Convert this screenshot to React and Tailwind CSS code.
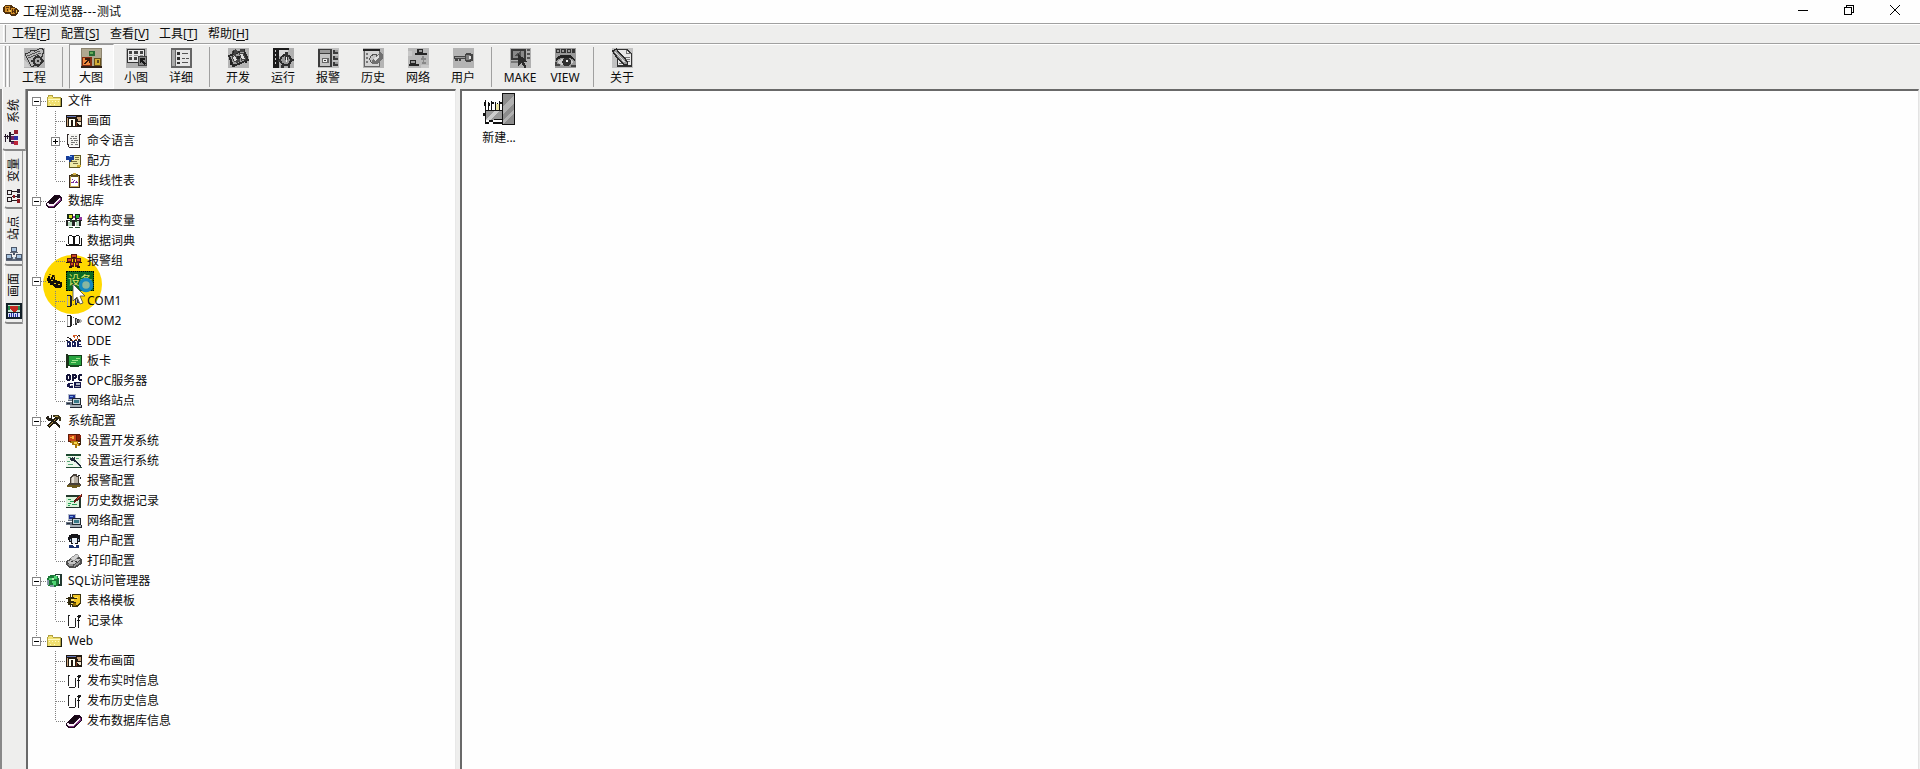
import { Fragment } from 'react';

const icons = {
  folder: (
    <>
      <path d="M1 4h1V2h5v2h8v10H1z" fill="#b0a040" />
      <path d="M2 4h1V3h3v1l1 1h7v8H2z" fill="#f0e070" />
      <path d="M2 6h12v1H2zM3 8h1v1H3zM6 8h1v1H6zM9 8h1v1H9zM12 8h1v1h-1zM4 11h1v1H4zM8 11h1v1H8z" fill="#fffac0" />
      <path d="M1 14h15V5h-1v8H1z" fill="#202010" />
    </>
  ),
  picture: (
    <>
      <path d="M0 2h16v12H0z" fill="#201810" />
      <path d="M1 3h9v1H1z" fill="#6878b8" />
      <path d="M1 5h1v8H1zM11 4h4v4h-3z" fill="#c8a078" />
      <path d="M3 6h2v7H3zM7 6h2v7H7zM3 6h6v1H3z" fill="#fffff0" />
      <path d="M11 9h4v3h-2z" fill="#eee8d0" />
      <path d="M10 9h1v4h-1z" fill="#803820" />
    </>
  ),
  script: (
    <>
      <path d="M2 1h11v12H2z" fill="#f4f4f0" />
      <path d="M1 1h2v1H2v9h1v3H2V12H1zM13 1h2v1h-1v12h-1zM3 14h11v1H3z" fill="#302828" />
      <path d="M5 3h3v1H5zM9 3h2v1H9zM4 5h2v1H4zM7 5h4v1H7zM5 7h2v1H5zM8 7h4v1H8zM5 9h4v1H5zM10 9h1v1h-1zM5 11h2v1H5zM9 11h3v1H9z" fill="#777" />
    </>
  ),
  recipe: (
    <>
      <path d="M5 2h10v11l-2 2H3V8h2z" fill="#605820" />
      <path d="M6 3h8v9l-2 2H4V9h2z" fill="#eeeaa8" />
      <path d="M0 3h4V2h4v5H5v2H3V7H0z" fill="#163c98" />
      <path d="M3 3h3v1H3z" fill="#62a6ee" />
      <path d="M9 4h4v1H9zM9 6h4v1H9zM6 8h5v1H6zM7 10h5v1H7z" fill="#777040" />
      <path d="M11 12h4v2h-4z" fill="#d0b030" />
    </>
  ),
  clipboard: (
    <>
      <path d="M3 2h11v13H3z" fill="#332418" />
      <path d="M4 3h9v11H4z" fill="#c8a858" />
      <path d="M5 4h7v9H5z" fill="#fff" />
      <path d="M5 1h7v3H5z" fill="#605018" />
      <path d="M7 0h3v2H7z" fill="#d4b048" />
      <path d="M5 9h2V8h1v2H5zM8 7h1v1H8zM9 9h1V8h1v1h1v1H9zM6 6h1v1H6z" fill="#8030a0" />
    </>
  ),
  database: (
    <>
      <path d="M0 10 9 2h4l3 3v3l-8 7H3l-3-2z" fill="#200820" />
      <path d="M1 12h6l8-7v3l-8 6H3z" fill="#813080" />
      <path d="M1 10h1l1 1h4l7-7v2l-7 7H3l-2-1z" fill="#faf0f8" />
      <path d="M2 9 9 3h4l-6 6z" fill="#150812" />
    </>
  ),
  struct: (
    <>
      <path d="M1 1h6v5H1zM9 1h5v5H9z" fill="#182818" />
      <path d="M3 2h3v3H3z" fill="#d8e020" />
      <path d="M10 2h3v3h-3z" fill="#28b038" />
      <path d="M0 7h16v1H0zM0 8h2v5H0zM6 8h3v5H6zM13 8h2v5h-2z" fill="#222" />
      <path d="M2 9h4v4H2zM10 8h3v5h-3z" fill="#b8dcc0" />
      <path d="M4 6h2v3H4zM9 6h2v3H9zM3 14h4v1H3zM9 14h5v1H9z" fill="#285030" />
      <path d="M7 3h2v2H7zM13 4h3v3h-3z" fill="#9038a0" />
    </>
  ),
  book: (
    <>
      <path d="M2 2h5l1 1 1-1h5v9H2z" fill="#fff" />
      <path d="M3 2h3v1H3zM10 2h3v1h-3zM2 3h1v8H2zM13 3h1v8h-1zM6 3h2v1H6zM8 3h2v1H8zM7 4h2v8H7zM0 12h16v1H0zM0 11h1v1H0zM15 5h1v7h-1zM3 11h4v1H3zM9 11h4v1H9z" fill="#111" />
    </>
  ),
  alarmGroup: (
    <>
      <path d="M5 1h6v5H5zM1 5h5v5H1zM10 5h5v5h-5zM4 9h4v5H4zM9 9h4v5H9zM7 6h2v4H7z" fill="#591812" />
      <path d="M6 2h4v2H6zM2 6h3v2H2zM11 6h3v2h-3zM5 10h2v2H5zM10 10h2v2h-2z" fill="#d14428" />
      <path d="M7 4h2v1H7zM0 9h3v1H0zM13 9h3v1h-3zM3 13h3v2H3zM11 13h3v2h-3z" fill="#22100c" />
    </>
  ),
  device: (
    <>
      <path d="M2 3h2v1h2V2h2v2h1v3h2v1h3v1h2v4l-2 2H9l-3-3H4v-2H2V8H1V5h1z" fill="#151008" />
      <path d="M4 4h1v2H4zM7 4h1v2H7zM5 7h2v1H5zM8 10h2v1H8zM12 11h2v1h-2z" fill="#e8c018" />
      <path d="M3 1h2v1H3zM8 2h1v2H8z" fill="#705808" />
    </>
  ),
  port: (
    <>
      <path d="M1 2h4v1h1v10H5v1H1v-1h3V3H1z" fill="#222" />
      <path d="M1 3h1v10H1z" fill="#aaa" />
      <path d="M9 5h2v1h2v4h-2v2H9z" fill="#333" />
      <path d="M10 6h1v4h-1zM13 6h2v1h1v2h-1v1h-2z" fill="#b4b4b4" />
      <path d="M7 4h1v1H7zM7 11h1v1H7zM12 7h2v2h-2z" fill="#666" />
    </>
  ),
  dde: (
    <>
      <path d="M7 2h4v1H9v2H8V4H7zM11 4h1v2h-1zM9 6h2v1H9zM5 7h2v1H5zM13 3h1v1h-1z" fill="#d05820" />
      <path d="M1 4h2v1H1zM3 5h2v1h1v2H4V6H3zM12 2h2v1h-2zM11 3h1v1h-1zM12 6h2v1h1v1h-3zM8 7h3v1H8zM0 7h2v1H0z" fill="#282020" />
      <path d="M1 8h3v1h1v5H1zM6 8h3v1h1v5H6zM11 8h4v1h-2v2h2v1h-2v1h3v1h-5z" fill="#182058" />
      <path d="M2 10h1v2H2zM7 10h1v2H7z" fill="#fff" />
    </>
  ),
  board: (
    <>
      <path d="M0 1h2v14H0z" fill="#20301c" />
      <path d="M2 2h14v11H2z" fill="#123c18" />
      <path d="M3 3h12v9H3z" fill="#28a440" />
      <path d="M10 5h4v1h-4zM6 7h6v1H6zM5 9h5v1H5z" fill="#9ce488" />
      <path d="M4 12h9v2H4z" fill="#174a1e" />
    </>
  ),
  opc: (
    <>
      <path d="M1 1h3v1h1v5H4v1H1V7H0V2h1zM6 1h4v1h1v3h-1v1H8v2H6zM13 1h3v2h-2v3h2v2h-3V7h-1V2h1z" fill="#141438" />
      <path d="M2 3h1v3H2zM8 3h1v1H8z" fill="#fff" />
      <path d="M2 10h5v1H4v2h3v2H3v-1H1v-3h1zM8 9h7v6H8z" fill="#161648" />
      <path d="M10 10h4v2h-4z" fill="#b0b8c8" />
      <path d="M9 13h5v1H9zM5 12h2v1H5z" fill="#99a" />
    </>
  ),
  network: (
    <>
      <path d="M2 1h8v6H2z" fill="#b4bcc8" />
      <path d="M3 2h6v4H3z" fill="#20308c" />
      <path d="M4 3h3v1H4z" fill="#6ca4e8" />
      <path d="M2 7h6v1H2zM0 9h6v3H0z" fill="#677384" />
      <path d="M6 5h9v7H6z" fill="#202830" />
      <path d="M7 6h7v5H7z" fill="#c4d0d8" />
      <path d="M8 7h5v3H8z" fill="#397887" />
      <path d="M4 12h11v3H4z" fill="#a8b0b8" />
      <path d="M4 15h12v-3h-1v2H4zM1 10h3v1H1z" fill="#252c38" />
    </>
  ),
  tools: (
    <>
      <path d="m2 14 9-9" stroke="#201c10" strokeWidth="3" />
      <path d="m3 13 7-7" stroke="#b09048" />
      <path d="m5 6 9 8" stroke="#201c14" strokeWidth="2.2" />
      <path d="M7 2h5l3 2v4h-2V6l-3-2H7z" fill="#3b3418" />
      <path d="M1 3h2v2h2V2h1v4L4 8H2L0 6V4h1z" fill="#252018" />
      <path d="M9 3h3v1H9z" fill="#b8a050" />
    </>
  ),
  devConfig: (
    <>
      <path d="M2 1h12v8H2z" fill="#5c1a08" />
      <path d="M3 2h7v6H3z" fill="#c84418" />
      <path d="M4 4h3v1H4zM6 3h2v3H6z" fill="#f8b040" />
      <path d="M11 2h4v5h-4z" fill="#88200a" />
      <path d="M5 8h7v2h2v3h-3v2H9v-3H6v-2H4z" fill="#a87810" />
      <path d="M8 9h3v2H8zM11 11h1v2h-1z" fill="#ffd848" />
      <path d="M14 5h1v7h-2v-2h1z" fill="#3c200c" />
    </>
  ),
  runConfig: (
    <>
      <path d="M0 1h15v13H0z" fill="#eef8ec" />
      <path d="M0 1h15v2H0zM0 14h16v1H0z" fill="#1d4830" />
      <path d="M2 4h3v1H2zM1 8h3v1H1zM10 5h3v1h-3zM2 11h5v1H2z" fill="#58a878" />
      <path d="m6 5 9 9" stroke="#202838" strokeWidth="2.8" />
      <path d="M4 5h2v2h2V4h1v4H7L5 8z" fill="#202838" />
      <path d="m9 9 5 5" stroke="#dce0e8" />
    </>
  ),
  bell: (
    <>
      <path d="M7 1h4v2h2v7l2 2v1H2v-2l2-2V4l3-2z" fill="#484038" />
      <path d="M7 3h3v1h2v6H5V6z" fill="#b8b0a4" />
      <path d="M6 4h2v6H6z" fill="#e4e0d8" />
      <path d="M1 12h13v2H1zM6 14h5v1H6z" fill="#6a581c" />
      <path d="M12 2h2v1h-2zM14 4h1v2h-1z" fill="#222" />
    </>
  ),
  history: (
    <>
      <path d="M0 2h15v13H0z" fill="#24382c" />
      <path d="M0 4h13v10H0z" fill="#ddf4dc" />
      <path d="M2 6h3v1H2zM4 8h4v1H4zM2 10h3v1H2zM6 11h5v1H6zM2 12h2v1H2z" fill="#28a058" />
      <path d="m8 9 8-7" stroke="#601c14" strokeWidth="2.4" />
      <path d="m11 6 4-4" stroke="#d84028" />
    </>
  ),
  user: (
    <>
      <path d="M3 2h2V1h7v1h2v7h-2v2H5V9H3V7H2V4h1z" fill="#15151a" />
      <path d="M6 5h5v5H9v1H7v-1H6z" fill="#e8f0f8" />
      <path d="M4 6h1v2H4zM12 6h1v2h-1z" fill="#8fb0d0" />
      <path d="M3 12h3l2 2 2-2h3v3H3z" fill="#17306c" />
      <path d="M7 12h3v2H8z" fill="#fff" />
    </>
  ),
  printer: (
    <>
      <path d="m0 8 7-4h6l3 3v4l-7 4H3l-3-3z" fill="#4c4c4c" />
      <path d="m1 9 6-3h6l1 1-6 4H3z" fill="#c4c4c4" />
      <path d="m4 6 6-5 3 2-5 5z" fill="#d2d2d2" stroke="#777" strokeWidth=".7" />
      <path d="m8 12 6-4v2l-6 4zM2 11h5v2H3z" fill="#949494" />
      <path d="M5 8h2v1H5zM9 8h2v1H9z" fill="#333" />
    </>
  ),
  sql: (
    <>
      <path d="M9 1h7v12h-5V2H9z" fill="#223830" />
      <path d="M11 2h3v9h-3z" fill="#f4fcf8" />
      <circle cx="7" cy="8" r="6.5" fill="#1c7838" />
      <path d="M3 5h3v2H3zM6 8h4v4H7v-2H6zM8 3h3v3H8z" fill="#50d474" />
      <path d="M1 7h2v5H1zM4 12h4v2H4z" fill="#8898a8" />
      <path d="M6 5h2v2H6z" fill="#b8f0b8" />
    </>
  ),
  template: (
    <>
      <path d="M6 1h9v9l-3 4H6z" fill="#39300a" />
      <path d="M7 2h7v7l-3 3H7z" fill="#f0c424" />
      <path d="M4 1h1v13H4zM0 5h11v1H0zM1 9h9v1H1zM2 4h6v8H2z" fill="#30280c" />
      <path d="M5 6h3v2H5zM5 10h2v1H5zM9 4h3v1H9z" fill="#ffe468" />
      <path d="M7 10h3v3H7z" fill="#8c6800" />
    </>
  ),
  record: (
    <>
      <path d="M2 2h2v1H3v10H2zM3 14h6v1H3zM9 5h1v9H9z" fill="#222" />
      <path d="M11 3h1V2h3v2h-1v1h-1v2h1v1h-1v7h-1V8h-1V7h1V4h-1z" fill="#181818" />
    </>
  ),
  tabSystem: (
    <>
      <path d="M0 6h5v1H0zM1 4h1v8H1zM5 2h2v10H5zM6 4h4v1H6zM6 11h4v1H6zM3 5h1v4H3z" fill="#241828" />
      <path d="M10 0h4v4h-4z" fill="#922030" />
      <path d="M10 6h4v4h-4z" fill="#3032a4" />
      <path d="M10 11h4v4h-4z" fill="#bd2538" />
      <path d="M7 6h3v4H7zM7 12h3v2H7z" fill="#732464" />
    </>
  ),
  tabVariable: (
    <>
      <path d="M1 2h5v5H1zM1 9h5v5H1zM6 3h8v1H6zM6 8h8v1H6zM6 12h8v1H6z" fill="#251c20" />
      <path d="M2 3h3v3H2zM2 10h3v3H2z" fill="#eee" />
      <path d="M7 7h2v3H7zM11 11h3v4h-3z" fill="#8b1820" />
      <path d="M11 1h3v4h-3zM11 6h3v4h-3z" fill="#2c2534" />
    </>
  ),
  tabStation: (
    <>
      <path d="M5 1h6v5H5zM0 8h6v6H0zM10 8h6v6h-6zM7 6h2v3H7z" fill="#4a5568" />
      <path d="M6 2h4v3H6zM1 9h4v3H1zM11 9h4v3h-4z" fill="#a8c4e0" />
      <path d="M6 11h4v4H6zM4 6h8v1H4zM0 14h16v1H0z" fill="#606878" />
      <path d="M7 11h2v2H7z" fill="#c8dcea" />
    </>
  ),
  tabPicture: (
    <>
      <path d="M0 0h16v16H0z" fill="#142028" />
      <path d="M2 2h12v7H2z" fill="#c8e4d0" />
      <path d="M4 3h8v4l-3 2H7L4 6z" fill="#c02820" />
      <path d="M2 3h2v4H2zM12 3h2v4h-2z" fill="#27884c" />
      <path d="M2 10h12v4H2z" fill="#d9e0fa" />
      <path d="M3 11h1v3H3zM5 10h1v4H5zM7 10h1v4H7zM9 11h1v3H9zM11 10h1v4h-1z" fill="#2430a0" />
    </>
  ),
  app: (
    <>
      <path d="M0 5 2 2h6l2 2 4 1 2 3-1 3-3 2H8l-2-2H2L0 8z" fill="#50300c" />
      <path d="M2 3h5v6H2zM8 5h4v6H8z" fill="#cf8c28" />
      <path d="M3 4h3v1H3zM4 6h1v2H4zM9 6h1v4H9zM11 6h1v4h-1zM9 8h3v1H9z" fill="#593008" />
      <path d="M6 7h2v2H6zM13 7h1v3h-1z" fill="#ecc050" />
    </>
  ),
};

const toolIcons = {
  project: (
    <>
      <path d="M0 0h20v20H0z" fill="#b4b4b4" />
      <path d="m1 6 5-2 1-2 3 1 7-3 2 3-4 12-8 4z" fill="#b8b8b8" stroke="#383838" />
      <path d="m3 8 12-5M4 10l12-5" stroke="#555" />
      <circle cx="13" cy="13" r="4" fill="#aaa" stroke="#303030" strokeWidth="2" />
      <path d="M12 7h2v3h-2zM12 16h2v3h-2zM7 12h3v2H7zM16 12h3v2h-3zM12 12h2v2h-2z" fill="#333" />
      <path d="m0 11 6 8H0z" fill="#ccc" />
    </>
  ),
  large: (
    <>
      <path d="M0 0h20v20H0z" fill="#8c8470" />
      <path d="M1 1h18v17H1z" fill="#b0a890" />
      <path d="M8 3h5v5H8z" fill="#286c34" />
      <path d="M9 4h2v2H9z" fill="#68ac58" />
      <path d="M1 9h9v10H1z" fill="#852a10" />
      <path d="M2 10h7v7H2z" fill="#f08a40" />
      <path d="m3 16 4-4M4 11h4v4" stroke="#3c1a0a" strokeWidth="1.5" fill="none" />
      <path d="M12 10h7v9h-7z" fill="#67501a" />
      <path d="M13 11h5v6h-5z" fill="#d4ac34" />
      <path d="M15 12h2v3h-2z" fill="#5a4820" />
      <path d="M0 18h20v2H0z" fill="#302018" />
    </>
  ),
  small: (
    <>
      <path d="M0 0h20v20H0z" fill="#b0b0b0" />
      <path d="M1 1h17v14H1z" fill="#333" />
      <path d="M2 2h15v12H2z" fill="#e8e8e8" />
      <path d="M3 3h3v3H3zM8 3h3v3H8zM13 3h3v3h-3zM3 9h3v3H3zM8 9h2v3H8z" fill="#444" />
      <path d="M3 7h3v1H3zM8 7h3v1H8zM13 7h3v1h-3z" fill="#999" />
      <path d="M11 8h9v10h-9z" fill="#444" />
      <path d="M12 9h7v8h-7z" fill="#888" />
      <path d="M13 10h5v2h-2l3 4-1 1-4-4v2h-1z" fill="#181818" />
    </>
  ),
  detail: (
    <>
      <path d="M0 0h20v20H0z" fill="#666" />
      <path d="M5 2h13v16H5z" fill="#e7e7e7" />
      <path d="M1 2h3v16H1z" fill="#aaa" />
      <path d="M6 4h3v3H6zM6 9h3v3H6zM6 14h3v2H6z" fill="#303030" />
      <path d="M10 5h6v1h-6zM10 10h3v1h-3zM14 10h3v1h-3zM10 14h6v1h-6z" fill="#555" />
    </>
  ),
  develop: (
    <>
      <path d="M0 0h20v20H0z" fill="#b4b4b4" />
      <path d="m1 8 14-6 4 10-14 6z" fill="#a0a0a0" stroke="#2a2a2a" strokeWidth="2" />
      <path d="m4 9 3-2 2 5-3 2zM11 6l3-1 3 6-4 1z" fill="#ddd" stroke="#444" />
      <path d="m3 4 4-3 3 3-4 3zM11 1h4v3h-4zM7 13l4-2 1 3-4 1z" fill="#444" />
      <path d="M2 13h2v4H2zM16 13h2v2h-2zM5 3h1v2H5zM9 8h2v3H9z" fill="#222" />
    </>
  ),
  run: (
    <>
      <path d="M0 0h20v20H0z" fill="#b0b0b0" />
      <path d="M0 0h6v20H0zM6 0h9v2H6z" fill="#1b1b1b" />
      <path d="M2 2h1v2H2zM2 6h1v2H2zM2 10h1v2H2zM2 14h1v2H2z" fill="#ccc" />
      <path d="M6 2h8v6H6z" fill="#d8d8d8" />
      <circle cx="12" cy="12" r="5" fill="#999" stroke="#2b2b2b" strokeWidth="2" />
      <path d="M11 4h3v8h-3zM5 12h3v2H5zM17 11h3v2h-3zM8 17h2v3H8zM14 17h2v3h-2z" fill="#333" />
      <path d="M12 9h1v5h-1z" fill="#eee" />
    </>
  ),
  alarm: (
    <>
      <path d="M0 0h20v20H0z" fill="#c0c0c0" />
      <path d="M0 1h13v18H0z" fill="#3c3c3c" />
      <path d="M2 6h9v12H2z" fill="#c4c4c4" />
      <path d="M2 2h9v3H2z" fill="#999" />
      <path d="M4 10h6v5H4z" fill="#666" />
      <path d="M5 11h4v3H5z" fill="#eee" />
      <path d="M6 12h2v1H6zM14 2h5v4h-5zM14 8h5v4h-5zM14 14h5v4h-5z" fill="#3a3a3a" />
      <path d="M16 2h3v2h-3zM16 8h3v2h-3zM16 14h3v2h-3z" fill="#999" />
    </>
  ),
  history: (
    <>
      <path d="M0 0h20v20H0z" fill="#b4b4b4" />
      <path d="M1 1h15v18H1z" fill="#666" />
      <path d="M2 3h13v15H2z" fill="#d4d4d4" />
      <path d="M0 1h16v2H0z" fill="#222" />
      <path d="M3 5h2v2H3zM3 9h2v2H3zM3 13h2v2H3z" fill="#777" />
      <circle cx="11" cy="11" r="4.5" fill="#c4c4c4" stroke="#555" />
      <path d="m8 13 9-9 2 2v5l-5 5H9z" fill="#707070" />
      <path d="m10 11 5-4v3l-3 3z" fill="#ddd" />
    </>
  ),
  network: (
    <>
      <path d="M0 0h20v20H0z" fill="#b8b8b8" />
      <path d="M9 1h5v4H9zM7 5h11v2H7zM2 12h6v4H2zM1 16h9v2H1z" fill="#262626" />
      <path d="M10 2h3v2h-3zM3 13h4v2H3z" fill="#999" />
      <path d="M13 8h2v2h2v2h-2v2h2v2h-4v-2h1v-2h-2v-2h2z" fill="#888" />
      <path d="M0 3h4v5H0zM12 17h8v3h-8z" fill="#c8c8c8" />
    </>
  ),
  key: (
    <>
      <path d="M0 0h20v20H0z" fill="#b4b4b4" />
      <path d="M1 8h10V6h1V5h5v1h2v7h-2v1h-5v-1h-1v-2H8v2H6v-2H5v2H2v-2H1z" fill="#444" />
      <path d="M2 9h9v1H2z" fill="#999" />
      <path d="M12 7h4v5h-4z" fill="#808080" />
      <path d="M15 8h2v3h-2z" fill="#ddd" />
    </>
  ),
  make: (
    <>
      <path d="M0 0h20v20H0z" fill="#b0b0b0" />
      <path d="M1 1h14v11H1z" fill="#3a3a3a" />
      <path d="M3 3h10v7H3z" fill="#8a8a8a" />
      <path d="m4 8 6-5v5z" fill="#505050" />
      <path d="M16 1h3v2h-3zM16 5h3v2h-3zM16 9h3v2h-3z" fill="#555" />
      <path d="m8 6 9 8h-4l3 5-2 1-3-5-3 3z" fill="#2c2c2c" />
      <path d="M1 13h7v2H1z" fill="#777" />
    </>
  ),
  view: (
    <>
      <path d="M0 0h20v20H0z" fill="#999" />
      <path d="M1 1h4v4H1zM6 1h4v4H6zM11 1h4v4h-4zM16 1h3v4h-3z" fill="#333" />
      <path d="M2 2h2v2H2zM7 2h2v2H7zM12 2h2v2h-2z" fill="#999" />
      <path d="M1 10 5 7h10l4 4v2l-4-3H5l-4 3z" fill="#222" />
      <path d="m2 14 4-3h8l4 3-4 3H6z" fill="#ccc" />
      <circle cx="11" cy="14" r="4" fill="#303030" />
      <path d="M10 12h2v2h-2z" fill="#eee" />
      <path d="M0 14h2v2h3v2H0zM15 17h5v2h-5z" fill="#444" />
    </>
  ),
  about: (
    <>
      <path d="M0 0h20v20H0z" fill="#c2c2c2" />
      <path d="M5 1h10l4 4v14H5z" fill="#333" />
      <path d="M6 2h8l4 4v11H6z" fill="#e8e8e8" />
      <path d="M13 2h1v3h4v1h-5zM9 9h8v1H9zM11 11h6v1h-6zM13 13h4v1h-4zM7 15h8v1H7z" fill="#777" />
      <path d="m1 3 3-2 11 13v3h-3L2 6z" fill="#999" stroke="#2a2a2a" strokeWidth="1.4" />
      <path d="m3 4 9 10" stroke="#ddd" />
    </>
  ),
};

const tree = [
  {
    label: '文件', icon: 'folder',
    children: [['画面', 'picture'], ['命令语言', 'script', true], ['配方', 'recipe'], ['非线性表', 'clipboard']],
  },
  {
    label: '数据库', icon: 'database',
    children: [['结构变量', 'struct'], ['数据词典', 'book'], ['报警组', 'alarmGroup']],
  },
  {
    label: '设备', icon: 'device', selected: true,
    children: [['COM1', 'port'], ['COM2', 'port'], ['DDE', 'dde'], ['板卡', 'board'], ['OPC服务器', 'opc'], ['网络站点', 'network']],
  },
  {
    label: '系统配置', icon: 'tools',
    children: [
      ['设置开发系统', 'devConfig'], ['设置运行系统', 'runConfig'], ['报警配置', 'bell'], ['历史数据记录', 'history'],
      ['网络配置', 'network'], ['用户配置', 'user'], ['打印配置', 'printer'],
    ],
  },
  { label: 'SQL访问管理器', icon: 'sql', children: [['表格模板', 'template'], ['记录体', 'record']] },
  {
    label: 'Web', icon: 'folder',
    children: [['发布画面', 'picture'], ['发布实时信息', 'record'], ['发布历史信息', 'record'], ['发布数据库信息', 'database']],
  },
];

const menus = [['工程', 'F'], ['配置', 'S'], ['查看', 'V'], ['工具', 'T'], ['帮助', 'H']];

const toolGroups = [
  [['工程', 'project']],
  [['大图', 'large'], ['小图', 'small'], ['详细', 'detail']],
  [['开发', 'develop'], ['运行', 'run'], ['报警', 'alarm'], ['历史', 'history'], ['网络', 'network'], ['用户', 'key']],
  [['MAKE', 'make'], ['VIEW', 'view']],
  [['关于', 'about']],
];

const tabs = [['系统', 'tabSystem'], ['变量', 'tabVariable'], ['站点', 'tabStation'], ['画面', 'tabPicture']];

function Icon({ name }) {
  return (
    <svg className="w-4 h-4 shrink-0" viewBox="0 0 16 16" fill="none" shapeRendering="crispEdges">
      {icons[name]}
    </svg>
  );
}

function TitleBar() {
  return (
    <div className="h-[23px] flex items-center bg-[#fefefe] pl-[3px]">
      <div className="-mt-px"><Icon name="app" /></div>
      <span className="ml-1">工程浏览器<span className="tracking-[0.8px]">---</span>测试</span>
      <div className="ml-auto flex items-center gap-9 pr-[20px] -mt-[3px]">
        <svg className="w-[10px] h-[10px]" viewBox="0 0 10 10" shapeRendering="crispEdges"><path d="M0 5h10v1H0z" /></svg>
        <svg className="w-[10px] h-[10px]" viewBox="0 0 10 10" fill="none" stroke="#000" shapeRendering="crispEdges">
          <path d="M.5 2.5h7v7h-7zM2.5 2V.5h7v7H8" />
        </svg>
        <svg className="w-[10px] h-[10px]" viewBox="0 0 10 10" stroke="#000"><path d="m0 0 10 10M10 0 0 10" /></svg>
      </div>
    </div>
  );
}

function MenuBar() {
  return (
    <div className="h-[20px] flex items-center pl-[3px] border-t border-[#a0a0a0] shadow-[inset_0_1px_0_#fff]">
      <div className="h-[17px] w-[3px] mr-[6px] border-l border-white border-r border-r-[#a0a0a0]" />
      {menus.map(([label, key]) => (
        <span key={key} className="w-[49px] whitespace-nowrap">
          {label}[<span className="underline underline-offset-2">{key}</span>]
        </span>
      ))}
    </div>
  );
}

function ToolButton({ label, icon, pressed }) {
  return (
    <div className={`w-[45px] flex flex-col items-center pt-[3px] pr-px border ${pressed ? 'bg-[#f8f8f8] border-l-[#999] border-t-[#999] border-r-white border-b-white' : 'border-transparent'}`}>
      <svg className="w-[21px] h-5 shrink-0" viewBox="0 0 20 20" preserveAspectRatio="none" fill="none" shapeRendering="crispEdges">
        {toolIcons[icon]}
      </svg>
      <span className="mt-px leading-[18px]">{label}</span>
    </div>
  );
}

function ToolBar() {
  return (
    <div className="h-[46px] flex pl-[3px] border-t border-[#a0a0a0] shadow-[inset_0_1px_0_#fff]">
      <div className="flex gap-px w-[9px] py-[2px]">
        <div className="w-[3px] border-l border-white border-r border-r-[#a0a0a0]" />
        <div className="w-[3px] border-l border-white border-r border-r-[#a0a0a0]" />
      </div>
      {toolGroups.map((group, i) => (
        <Fragment key={i}>
          {i > 0 && <div className="w-px ml-[5px] mr-[6px] mt-[3px] mb-[2px] bg-[#a0a0a0]" />}
          {group.map(([label, icon]) => (
            <ToolButton key={label} label={label} icon={icon} pressed={label === '大图'} />
          ))}
        </Fragment>
      ))}
    </div>
  );
}

function SideTabs() {
  return (
    <div className="w-[26px] shrink-0 border-l-2 border-[#888] flex flex-col">
      {tabs.map(([label, icon], i) => (
        <div
          key={label}
          className={`flex flex-col items-center border-l border-white border-b-2 border-b-[#888] border-r border-r-[#999] rounded-bl-sm ${i === 0 ? 'h-[62px] pt-[9px]' : 'h-[57.5px] ml-[2px] mr-[3px] pt-[6px]'}`}
        >
          <span className="h-[26px] w-[16px] leading-[16px] flex items-center justify-center [writing-mode:vertical-rl] [text-orientation:sideways] rotate-180">
            {label}
          </span>
          <div className={i === 0 ? 'mt-[6px] mr-[4px]' : 'mt-[5px]'}><Icon name={icon} /></div>
        </div>
      ))}
    </div>
  );
}

function Expander({ open }) {
  return (
    <svg className="w-[9px] h-[9px] shrink-0" viewBox="0 0 9 9" shapeRendering="crispEdges">
      <path d="M0 0h9v9H0z" fill="#848484" />
      <path d="M1 1h7v7H1z" fill="#fff" />
      <path d={open ? 'M2 4h5v1H2z' : 'M2 4h5v1H2zM4 2h1v5H4z'} />
    </svg>
  );
}

// one 20px column of dotted guide line; `stop` ends it at the row's centre
function Guide({ className = '', start = 0, stop = 20 }) {
  return (
    <svg className={`w-px h-5 shrink-0 ${className}`} viewBox="0 0 1 20" shapeRendering="crispEdges">
      <path d={`M.5 ${start}V${stop}`} stroke="#808080" strokeDasharray="1 1" />
    </svg>
  );
}

function HLine({ className }) {
  return (
    <svg className={`h-px shrink-0 ${className}`} shapeRendering="crispEdges">
      <path d="M0 .5h12" stroke="#808080" strokeDasharray="1 1" />
    </svg>
  );
}

// busy ring and arrow over the highlighted click spot
function Pointer() {
  return (
    <svg className="absolute left-[43px] top-0 w-[30px] h-[36px] z-10" viewBox="0 0 30 36">
      <circle cx="15" cy="14" r="5.5" fill="#8ab7a0" stroke="#1688bd" strokeWidth="3.5" />
      <path d="M2 13v17l4-4 3 7 3-1-3-7h5z" fill="#fff" stroke="#444" strokeWidth=".8" />
    </svg>
  );
}

function TreeNode({ node, first, last }) {
  return (
    <div className="relative">
      {node.selected && <div className="absolute -z-10 left-[15px] -top-[16px] w-[59px] h-[59px] rounded-full bg-[#ffd900]" />}
      <div className="h-5 flex items-center pl-1">
        <div className="relative w-[9px] h-5 flex items-center justify-center">
          <Guide start={first ? 10 : 0} stop={last ? 10 : 20} />
          <div className="absolute inset-0 flex items-center"><Expander open /></div>
        </div>
        <HLine className="w-[5px]" />
        <Icon name={node.icon} />
        <span className={`ml-1 px-0.5 whitespace-nowrap ${node.selected ? 'bg-[#0c6a20] text-[#dfe46c] outline outline-1 -outline-offset-1 outline-dotted outline-black h-5 flex items-center' : ''}`}>
          {node.label}
        </span>
      </div>
      {node.children.map(([label, icon, closed], i) => (
        <div key={label} className="h-5 flex items-center pl-2">
          <Guide className={last ? 'invisible' : ''} />
          <Guide className="ml-[18px]" stop={i === node.children.length - 1 ? 10 : 20} />
          {closed ? (
            <>
              <div className="-ml-[5px] z-[1]"><Expander /></div>
              <HLine className="w-[6px]" />
            </>
          ) : (
            <HLine className="w-[10px]" />
          )}
          <Icon name={icon} />
          <span className="ml-[5px] whitespace-nowrap">{label}</span>
        </div>
      ))}
      {node.selected && <Pointer />}
    </div>
  );
}

export default function App() {
  return (
    <div className="w-screen h-[769px] overflow-hidden flex flex-col bg-[#eeeeed] text-[#0c0c0c] text-[12px] leading-[16px] font-['Noto_Sans','Noto_Sans_CJK_SC',sans-serif] select-none">
      <TitleBar />
      <MenuBar />
      <ToolBar />
      <div className="flex-1 min-h-0 flex">
        <SideTabs />
        <div className="isolate w-[430px] shrink-0 bg-[#fefefe] border-t-2 border-l-2 border-[#696969] border-r border-r-[#e8e8e8]">
          {tree.map((node, i) => (
            <TreeNode key={node.label} node={node} first={i === 0} last={i === tree.length - 1} />
          ))}
        </div>
        <div className="flex-1 ml-1 mr-[1px] bg-[#fefefe] border-t-2 border-l-2 border-[#696969] border-r border-r-[#e3e3e3]">
          <div className="w-[74px] pt-[2px] flex flex-col items-center">
            <svg className="w-8 h-8" viewBox="0 0 32 32" shapeRendering="crispEdges">
              <path d="M19 0h13v32H19z" fill="#111" />
              <path d="M20 1h11v30H20z" fill="#8c8c8c" />
              <path d="m20 14 11-12v8L20 22zM20 28l11-12v4L21 31h-1z" fill="#b0b0b0" />
              <path d="M2 7h1v24H2zM0 20h2v3H0zM1 9h1v4H1z" fill="#111" />
              <path d="M3 18h16v9H3z" fill="#999" />
              <path d="m3 26 8-8h5l-9 9H3z" fill="#ccc" />
              <path d="M3 17h16v1H3zM5 9h1v8H5zM8 8h1v9H8zM12 9h1v8h-1zM16 8h1v9h-1zM6 10h1v3H6zM9 9h2v2H9zM14 10h1v3h-1zM17 9h2v2h-2z" fill="#111" />
              <path d="M13 11h3v6h-3z" fill="#eee7a4" />
              <path d="M3 29h3v-2h4v2h9v2h-9v-2H6v2H3zM11 26h8v1h-8z" fill="#111" />
            </svg>
            <span className="mt-[5px]">新建...</span>
          </div>
        </div>
      </div>
    </div>
  );
}
